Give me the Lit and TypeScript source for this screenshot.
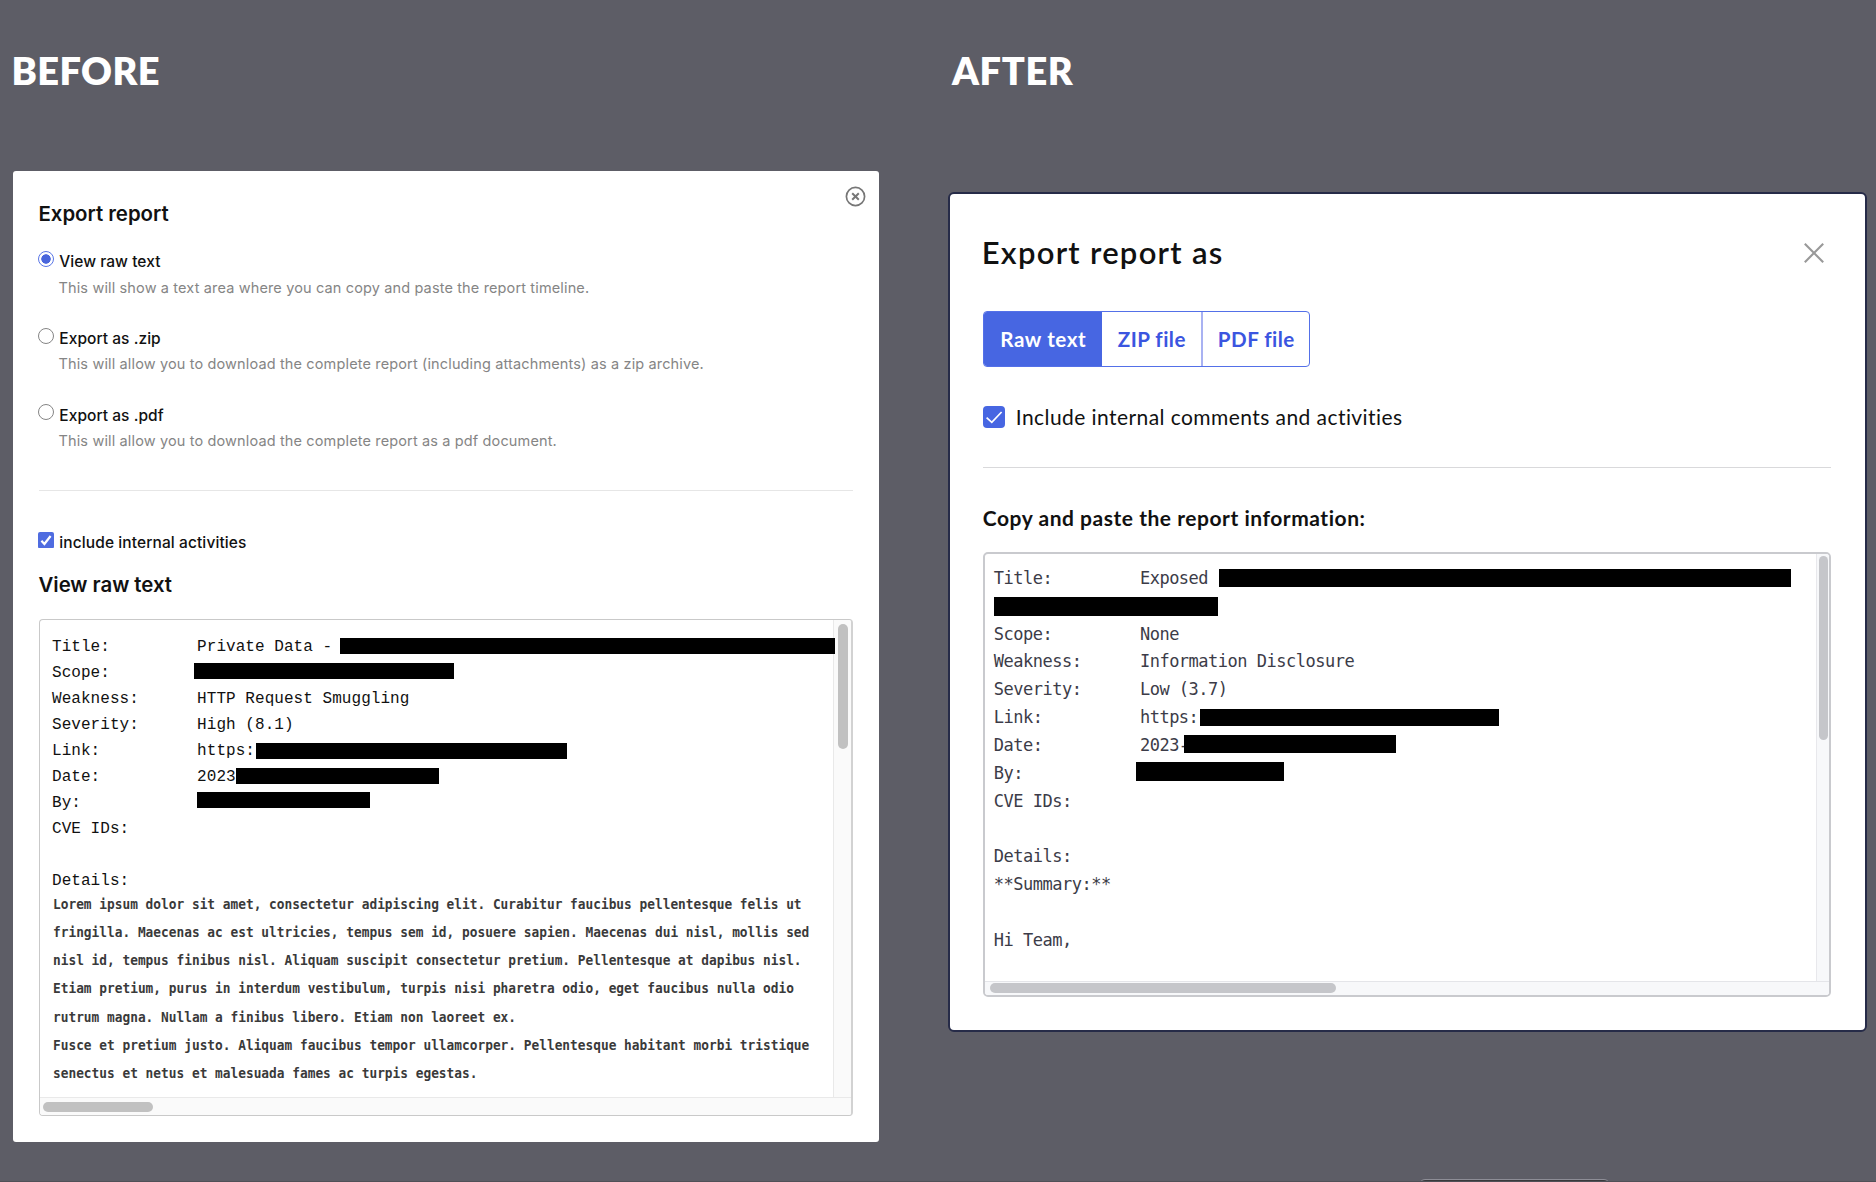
import { LitElement, html, css, nothing } from "lit";
import { customElement, property } from "lit/decorators.js";
import { styleMap } from "lit/directives/style-map.js";

interface Mask {
  left: number;
  top: number;
  width: number;
  height: number;
}

interface Row {
  label?: string;
  value?: string;
  mask?: Mask;
}

const OLD_ROWS: Row[] = [
  { label: "Title:", value: "Private Data -", mask: { left: 143, top: 4.4, width: 494.5, height: 16 } },
  { label: "Scope:", mask: { left: -2.8, top: 3.5, width: 260, height: 15.6 } },
  { label: "Weakness:", value: "HTTP Request Smuggling" },
  { label: "Severity:", value: "High (8.1)" },
  { label: "Link:", value: "https:", mask: { left: 58.7, top: 5.2, width: 311.5, height: 15.6 } },
  { label: "Date:", value: "2023", mask: { left: 38.7, top: 4.7, width: 203, height: 15.6 } },
  { label: "By:", mask: { left: 0.2, top: 2.1, width: 172.6, height: 16.2 } },
  { label: "CVE IDs:" },
  {},
  { label: "Details:" },
];

const LOREM = [
  "Lorem ipsum dolor sit amet, consectetur adipiscing elit. Curabitur faucibus pellentesque felis ut",
  "fringilla. Maecenas ac est ultricies, tempus sem id, posuere sapien. Maecenas dui nisl, mollis sed",
  "nisl id, tempus finibus nisl. Aliquam suscipit consectetur pretium. Pellentesque at dapibus nisl.",
  "Etiam pretium, purus in interdum vestibulum, turpis nisi pharetra odio, eget faucibus nulla odio",
  "rutrum magna. Nullam a finibus libero. Etiam non laoreet ex.",
  "Fusce et pretium justo. Aliquam faucibus tempor ullamcorper. Pellentesque habitant morbi tristique",
  "senectus et netus et malesuada fames ac turpis egestas.",
];

const NEW_ROWS: Row[] = [
  { label: "Title:", value: "Exposed", mask: { left: 79.6, top: 3.9, width: 572, height: 18.3 } },
  { mask: { left: -145.6, top: 4.7, width: 223.5, height: 18.3 } },
  { label: "Scope:", value: "None" },
  { label: "Weakness:", value: "Information Disclosure" },
  { label: "Severity:", value: "Low (3.7)" },
  { label: "Link:", value: "https:", mask: { left: 60.6, top: 4.6, width: 298.2, height: 17.4 } },
  { label: "Date:", value: "2023-", mask: { left: 44, top: 3.1, width: 212, height: 18.2 } },
  { label: "By:", mask: { left: -4, top: 2.5, width: 148.2, height: 18.2 } },
  { label: "CVE IDs:" },
  {},
  { label: "Details:" },
  { label: "**Summary:**" },
  {},
  { label: "Hi Team," },
];

const OPTIONS = [
  { label: "View raw text", hint: "This will show a text area where you can copy and paste the report timeline.", on: true },
  { label: "Export as .zip", hint: "This will allow you to download the complete report (including attachments) as a zip archive.", on: false },
  { label: "Export as .pdf", hint: "This will allow you to download the complete report as a pdf document.", on: false },
];

const px = (n: number) => `${n}px`;

const reportRow = (r: Row) => html`<div class="row">
  <span class="key">${r.label ?? nothing}</span>
  <span class="val"
    >${r.value ?? nothing}${r.mask
      ? html`<i
          class="mask"
          style=${styleMap({
            left: px(r.mask.left),
            top: px(r.mask.top),
            width: px(r.mask.width),
            height: px(r.mask.height),
          })}
        ></i>`
      : nothing}</span
  >
</div>`;

const rowStyles = css`
  .row {
    display: flex;
    white-space: pre;
  }
  .key {
    flex: none;
  }
  .val {
    flex: none;
    position: relative;
  }
  .mask {
    position: absolute;
    background: #000;
  }
`;

@customElement("export-dialog-old")
class ExportDialogOld extends LitElement {
  static styles = [
    rowStyles,
    css`
      :host {
        display: flex;
        flex-direction: column;
        position: relative;
        box-sizing: border-box;
        width: 865.7px;
        height: 971.3px;
        padding: 29px 26px 0 26px;
        background: #fff;
        border-radius: 3px;
        font-family: Inter, "Liberation Sans", sans-serif;
        color: #111;
      }
      .title {
        margin: 0 0 0 -0.5px;
        font-size: 20.4px;
        line-height: 28px;
        font-weight: 600;
        letter-spacing: -0.02px;
      }
      .close {
        position: absolute;
        right: 13px;
        top: 15px;
        width: 21px;
        height: 21px;
      }
      .options {
        margin-top: 21.3px;
      }
      .option {
        height: 76.8px;
      }
      .line {
        display: flex;
        gap: 5px;
        font-size: 15.5px;
        line-height: 26px;
        font-weight: 500;
        letter-spacing: 0.05px;
      }
      .radio {
        box-sizing: border-box;
        width: 16px;
        height: 16px;
        margin: 1.8px 0 0 -0.7px;
        border: 1.2px solid #858585;
        border-radius: 50%;
      }
      .radio.on {
        border-color: #5a76e6;
        background: radial-gradient(circle, #4a66dc 0 4.4px, #fff 5px);
      }
      .hint {
        margin: 0.5px 0 0 19.5px;
        font-size: 14.5px;
        line-height: 24px;
        letter-spacing: 0.14px;
        color: #858585;
        white-space: nowrap;
      }
      .rule {
        height: 1.4px;
        margin-top: 10.5px;
        background: #e6e6e6;
      }
      .include {
        margin-top: 38.6px;
        letter-spacing: 0.1px;
      }
      .box {
        width: 16px;
        height: 16.6px;
        margin: 1.8px 0 0 -0.7px;
      }
      .sub {
        margin-top: 15.2px;
      }
      .area {
        display: grid;
        grid-template: 1fr 18.5px / 1fr 17.5px;
        box-sizing: border-box;
        height: 497.6px;
        margin-top: 19.6px;
        border: 1.4px solid #c9c9c9;
        border-right: 2px solid #d2d2d2;
        border-radius: 4px;
        overflow: hidden;
      }
      .text {
        padding: 13.8px 0 0 12px;
        font: 16px/26.06px "Liberation Mono", monospace;
        letter-spacing: 0.05px;
        color: #111;
        min-width: 0;
      }
      .key {
        width: 145.1px;
      }
      .row {
        height: 26.06px;
      }
      .lorem {
        margin: -4.5px 0 0 0.6px;
        font: 700 14.2px/28.33px "DejaVu Sans Mono", monospace;
        letter-spacing: 0;
        color: #3a3a3a;
        white-space: pre;
        width: 600px;
        transform: scaleX(0.9035);
        transform-origin: 0 0;
      }
      .vbar {
        background: #fafafa;
        border-left: 1px solid #e9e9e9;
      }
      .vthumb {
        width: 10px;
        height: 125px;
        margin: 4.3px 0 0 4px;
        border-radius: 5px;
        background: #c1c1c1;
      }
      .hbar {
        grid-column: 1 / -1;
        background: #fafafa;
        border-top: 1px solid #e9e9e9;
      }
      .hthumb {
        width: 109.5px;
        height: 10px;
        margin: 4px 0 0 3.3px;
        border-radius: 5px;
        background: #c1c1c1;
      }
    `,
  ];

  render() {
    return html`
      <svg class="close" viewBox="0 0 21 21" fill="none" stroke="#777">
        <circle cx="10.5" cy="10.5" r="9.1" stroke-width="1.7" />
        <path d="M7.2 7.2l6.6 6.6M13.8 7.2l-6.6 6.6" stroke-width="2" />
      </svg>
      <h2 class="title">Export report</h2>
      <div class="options">
        ${OPTIONS.map(
          (o) => html`<div class="option">
            <div class="line"><span class="radio ${o.on ? "on" : ""}"></span><span>${o.label}</span></div>
            <div class="hint">${o.hint}</div>
          </div>`
        )}
      </div>
      <div class="rule"></div>
      <div class="line include">
        <svg class="box" viewBox="0 0 16 16.6">
          <rect width="16" height="16.6" rx="2" fill="#4f6ce0" />
          <path d="M3.4 8.8l3 3.2L12.6 4" fill="none" stroke="#fff" stroke-width="2.2" />
        </svg>
        <span>include internal activities</span>
      </div>
      <h2 class="title sub">View raw text</h2>
      <div class="area">
        <div class="text">
          ${OLD_ROWS.map(reportRow)}
          <div class="lorem">${LOREM.map((l) => html`<div>${l}</div>`)}</div>
        </div>
        <div class="vbar"><div class="vthumb"></div></div>
        <div class="hbar"><div class="hthumb"></div></div>
      </div>
    `;
  }
}

@customElement("export-dialog-new")
class ExportDialogNew extends LitElement {
  static styles = [
    rowStyles,
    css`
      :host {
        display: flex;
        flex-direction: column;
        box-sizing: border-box;
        width: 918.5px;
        height: 840px;
        padding: 39.5px 33.5px 0 33px;
        border: 2px solid #262b48;
        background: #fff;
        border-radius: 6px;
        font-family: Lato, "Liberation Sans", sans-serif;
        color: #111;
      }
      .head {
        display: flex;
        justify-content: space-between;
        padding-right: 7px;
      }
      .title {
        margin: 0 0 0 -1.6px;
        font-size: 31px;
        line-height: 36px;
        font-weight: 600;
        letter-spacing: 1.27px;
      }
      .close {
        width: 20px;
        height: 20px;
        margin-top: 9px;
      }
      .tabs {
        display: flex;
        margin-top: 41.3px;
        height: 55.8px;
        width: 327px;
        box-sizing: border-box;
        border: 1.5px solid #5470e8;
        border-radius: 4px;
        overflow: hidden;
      }
      .tab {
        display: flex;
        align-items: center;
        justify-content: center;
        box-sizing: border-box;
        padding-bottom: 1px;
        font-size: 20.6px;
        font-weight: 700;
        letter-spacing: 0.45px;
        color: #3b55e0;
      }
      .tab:nth-child(1) {
        width: 118px;
        color: #fff;
        background: #4766e2;
        letter-spacing: 0.6px;
      }
      .tab:nth-child(2) {
        width: 101px;
        border-right: 2px solid #a9b2f2;
      }
      .tab:nth-child(3) {
        flex: 1;
      }
      .include {
        display: flex;
        gap: 10.5px;
        align-items: center;
        margin-top: 39px;
        height: 22px;
        font-size: 21px;
        letter-spacing: 0.43px;
      }
      .include span {
        margin-top: -2px;
      }
      .box {
        width: 22px;
        height: 22px;
      }
      .rule {
        height: 1.4px;
        margin-top: 38.7px;
        background: #d9d9db;
      }
      .sub {
        margin: 34.8px 0 0 -0.5px;
        font-size: 21px;
        line-height: 30px;
        font-weight: 700;
        letter-spacing: 0.53px;
      }
      .area {
        display: grid;
        grid-template: 1fr 14.5px / 1fr 13.5px;
        box-sizing: border-box;
        height: 445.4px;
        margin-top: 18.8px;
        border: 2px solid #c9cace;
        border-radius: 5px;
        overflow: hidden;
      }
      .text {
        padding: 11.1px 0 0 8.5px;
        font: 17px/27.87px "DejaVu Sans Mono", "Liberation Mono", monospace;
        letter-spacing: -0.49px;
        color: #3c3c48;
        min-width: 0;
      }
      .row {
        height: 27.87px;
      }
      .key {
        width: 146.1px;
      }
      .vbar {
        background: #f7f8fa;
        border-left: 1px solid #e8e8ec;
      }
      .vthumb {
        width: 9px;
        height: 184px;
        margin: 2.5px 0 0 2px;
        border-radius: 5px;
        background: #c5c6ca;
      }
      .hbar {
        grid-column: 1 / -1;
        background: #f7f8fa;
        border-top: 1px solid #e4e5e9;
      }
      .hthumb {
        width: 346.5px;
        height: 10px;
        margin: 1.5px 0 0 4.5px;
        border-radius: 5px;
        background: #c5c6ca;
      }
    `,
  ];

  @property() accent = "#4766e2";

  render() {
    return html`
      <div class="head">
        <h1 class="title">Export report as</h1>
        <svg class="close" viewBox="0 0 20 20" fill="none" stroke="#999" stroke-width="2.1">
          <path d="M.8 .8l18.4 18.4M19.2 .8L.8 19.2" />
        </svg>
      </div>
      <div class="tabs">
        <div class="tab">Raw text</div>
        <div class="tab">ZIP file</div>
        <div class="tab">PDF file</div>
      </div>
      <div class="include">
        <svg class="box" viewBox="0 0 22 22">
          <rect width="22" height="22" rx="4" fill=${this.accent} />
          <path d="M3.6 11.6l5.2 4.8L18.6 6" fill="none" stroke="#fff" stroke-width="1.7" />
        </svg>
        <span>Include internal comments and activities</span>
      </div>
      <div class="rule"></div>
      <h3 class="sub">Copy and paste the report information:</h3>
      <div class="area">
        <div class="text">${NEW_ROWS.map(reportRow)}</div>
        <div class="vbar"><div class="vthumb"></div></div>
        <div class="hbar"><div class="hthumb"></div></div>
      </div>
    `;
  }
}

@customElement("app-root")
class AppRoot extends LitElement {
  static styles = css`
    :host {
      display: flex;
      position: relative;
      box-sizing: border-box;
      height: 1182px;
      padding: 45.7px 0 0 13px;
      overflow: hidden;
      background: #5d5d66;
      border-bottom: 1px solid #505057;
    }
    .col {
      flex: none;
    }
    .before {
      width: 935.3px;
    }
    .heading {
      height: 48px;
      font: 800 38px/48px Lato, "Liberation Sans", sans-serif;
      letter-spacing: 0.4px;
      color: #fff;
    }
    .before .heading {
      margin: 0 0 77.1px -1.6px;
    }
    .after .heading {
      margin: 0 0 98.8px 3.6px;
      letter-spacing: 0.6px;
    }
    .pill {
      position: absolute;
      left: 1419px;
      top: 1178.5px;
      width: 189px;
      height: 30px;
      border: 1.5px solid #8d8d96;
      border-radius: 6px;
      background: #3a3a3c;
    }
  `;

  render() {
    return html`
      <section class="col before">
        <div class="heading">BEFORE</div>
        <export-dialog-old></export-dialog-old>
      </section>
      <section class="col after">
        <div class="heading">AFTER</div>
        <export-dialog-new></export-dialog-new>
      </section>
      <div class="pill"></div>
    `;
  }
}
